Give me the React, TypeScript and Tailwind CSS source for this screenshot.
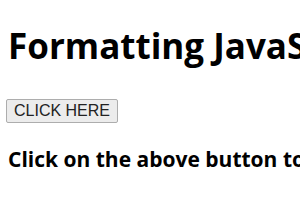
export default function App() {
  return (
    <div className="min-h-[210px] w-[300px] overflow-hidden bg-white text-black">
      <div className="pl-2 pt-[24px]">
        <h1 className="whitespace-nowrap font-['Open_Sans',sans-serif] text-[35px] font-bold leading-[44px]">
          Formatting JavaScript Strings
        </h1>
        <button className="ml-[-2px] mt-[31px] block h-6 w-[112px] rounded-[2px] border border-[#adadad] bg-[#ececec] font-['Liberation_Sans',Arial,sans-serif] text-[16px] leading-none text-[#222]">
          CLICK HERE
        </button>
        <p className="mt-[24px] whitespace-nowrap font-['Open_Sans',sans-serif] text-[21px] font-bold leading-6">
          Click on the above button to format the string
        </p>
      </div>
    </div>
  );
}
